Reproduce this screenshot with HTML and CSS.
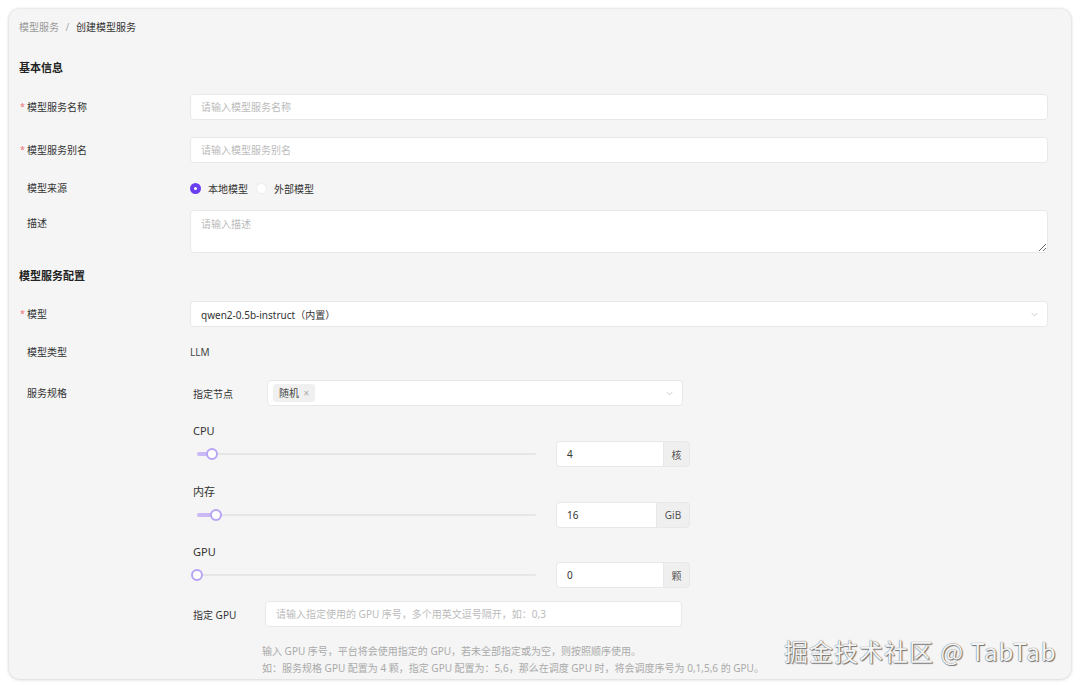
FILE: index.html
```html
<!DOCTYPE html>
<html lang="zh-CN">
<head>
    <meta charset="UTF-8">
    <title>创建模型服务</title>
    <link rel="stylesheet" href="styles.css">
</head>
<body>
    <div class="card">
        <div class="breadcrumb">
            <span class="crumb-link">模型服务</span>
            <span class="crumb-sep">/</span>
            <span class="crumb-current">创建模型服务</span>
        </div>

        <div class="section-title first">基本信息</div>

        <div class="form-item">
            <div class="label required">模型服务名称</div>
            <div class="control"><input class="input" placeholder="请输入模型服务名称"></div>
        </div>
        <div class="form-item alias-item">
            <div class="label required">模型服务别名</div>
            <div class="control"><input class="input" placeholder="请输入模型服务别名"></div>
        </div>
        <div class="form-item radio-item">
            <div class="label">模型来源</div>
            <div class="control radio-group">
                <span class="radio checked"></span><span class="radio-text">本地模型</span>
                <span class="radio"></span><span class="radio-text">外部模型</span>
            </div>
        </div>
        <div class="form-item desc-item">
            <div class="label">描述</div>
            <div class="control"><textarea class="textarea" placeholder="请输入描述"></textarea></div>
        </div>

        <div class="section-title">模型服务配置</div>

        <div class="form-item">
            <div class="label required">模型</div>
            <div class="control">
                <div class="select">
                    <span>qwen2-0.5b-instruct（内置）</span>
                    <svg class="arrow" width="9" height="9" viewBox="0 0 10 10"><path d="M2 3.5 L5 6.5 L8 3.5" fill="none" stroke="#c4c4c4" stroke-width="1"/></svg>
                </div>
            </div>
        </div>
        <div class="form-item text-item">
            <div class="label">模型类型</div>
            <div class="control plain">LLM</div>
        </div>
        <div class="form-item">
            <div class="label">服务规格</div>
            <div class="control spec">
                <div class="sub-item">
                    <div class="sub-label">指定节点</div>
                    <div class="select node-select">
                        <span class="tag">随机 <span class="tag-close">×</span></span>
                        <svg class="arrow" width="9" height="9" viewBox="0 0 10 10"><path d="M2 3.5 L5 6.5 L8 3.5" fill="none" stroke="#c4c4c4" stroke-width="1"/></svg>
                    </div>
                </div>

                <div class="res-title">CPU</div>
                <div class="res-row">
                    <div class="slider">
                        <div class="track"></div>
                        <div class="fill" style="width: 15px"></div>
                        <div class="handle" style="left: 15px"></div>
                    </div>
                    <div class="input-group">
                        <input class="input" value="4">
                        <span class="addon">核</span>
                    </div>
                </div>

                <div class="res-title">内存</div>
                <div class="res-row">
                    <div class="slider">
                        <div class="track"></div>
                        <div class="fill" style="width: 19px"></div>
                        <div class="handle" style="left: 19px"></div>
                    </div>
                    <div class="input-group">
                        <input class="input" value="16">
                        <span class="addon wide">GiB</span>
                    </div>
                </div>

                <div class="res-title gpu-title">GPU</div>
                <div class="res-row">
                    <div class="slider">
                        <div class="track"></div>
                        <div class="handle" style="left: 0px"></div>
                    </div>
                    <div class="input-group">
                        <input class="input" value="0">
                        <span class="addon">颗</span>
                    </div>
                </div>

                <div class="sub-item gpu-item">
                    <div class="sub-label">指定 GPU</div>
                    <input class="input gpu-input" placeholder="请输入指定使用的 GPU 序号，多个用英文逗号隔开，如：0,3">
                </div>
                <div class="help">
                    输入 GPU 序号，平台将会使用指定的 GPU，若未全部指定或为空，则按照顺序使用。<br>
                    如：服务规格 GPU 配置为 4 颗，指定 GPU 配置为：5,6，那么在调度 GPU 时，将会调度序号为 0,1,5,6 的 GPU。
                </div>
            </div>
        </div>
    </div>

    <div class="watermark">掘金技术社区 @ TabTab</div>
</body>
</html>
```

FILE: styles.css
```css
body {
    margin: 0;
    padding: 9px;
    background-color: #ffffff;
    font-family: "Noto Sans", "Noto Sans CJK SC", sans-serif;
    color: #333;
    font-size: 10px;
    height: 687px;
    box-sizing: border-box;
    overflow: hidden;
}

.card {
    background-color: #f5f5f5;
    border-radius: 10px;
    box-shadow: 0 0 3px rgba(0, 0, 0, 0.18), 0 1px 4px rgba(0, 0, 0, 0.08);
    height: 670px;
    width: 1062px;
    box-sizing: border-box;
    padding: 11px 23px 0 10px;
    overflow: hidden;
}

.breadcrumb {
    line-height: 14px;
    font-size: 10px;
}

.crumb-link {
    color: #999;
}

.crumb-sep {
    color: #aaa;
    margin: 0 4px;
}

.crumb-current {
    color: #333;
}

.section-title {
    font-size: 11px;
    font-weight: bold;
    line-height: 14px;
    color: #222;
    margin: 0 0 18px;
}

.section-title.first {
    margin-top: 27px;
    margin-bottom: 19px;
}

.form-item {
    display: flex;
    align-items: flex-start;
    margin-bottom: 17px;
}

.alias-item,
.desc-item {
    margin-bottom: 16px;
}

.label {
    width: 171px;
    flex-shrink: 0;
    line-height: 26px;
    padding-left: 8px;
    box-sizing: border-box;
    color: #333;
    position: relative;
}

.label.required::before {
    content: "*";
    color: #ee6e73;
    font-size: 9px;
    position: absolute;
    left: 1px;
    top: 0;
}

.control {
    flex: 1;
}

.input {
    width: 100%;
    height: 26px;
    box-sizing: border-box;
    border: 1px solid #e8e8e8;
    border-radius: 4px;
    background: #fff;
    padding: 0 10px;
    font-family: inherit;
    font-size: 10px;
    color: #333;
    outline: none;
}

.input::placeholder,
.textarea::placeholder {
    color: #bbb;
}

.textarea {
    width: 100%;
    height: 43px;
    box-sizing: border-box;
    border: 1px solid #e8e8e8;
    border-radius: 4px;
    background: #fff;
    padding: 5px 10px;
    font-family: inherit;
    font-size: 10px;
    resize: vertical;
    display: block;
    outline: none;
}

.radio-item {
    margin-bottom: 13px;
}

.radio-item .label {
    line-height: 18px;
}

.radio-group {
    display: flex;
    align-items: center;
    height: 18px;
}

.radio {
    width: 11px;
    height: 11px;
    border-radius: 50%;
    background: #fff;
    border: 1px solid #eee;
    box-sizing: border-box;
    margin-right: 7px;
}

.radio.checked {
    border: 3px solid #6b3ff0;
    background: #6b3ff0;
    position: relative;
}

.radio.checked::after {
    content: "";
    position: absolute;
    left: 1px;
    top: 1px;
    width: 3px;
    height: 3px;
    background: #fff;
    border-radius: 50%;
}

.radio-text {
    margin-right: 8px;
    color: #333;
}

.select {
    height: 26px;
    box-sizing: border-box;
    border: 1px solid #e8e8e8;
    border-radius: 4px;
    background: #fff;
    display: flex;
    align-items: center;
    justify-content: space-between;
    padding: 0 8px 0 10px;
    color: #333;
}

.text-item {
    margin-bottom: 20px;
}

.text-item .label,
.plain {
    line-height: 16px;
}

.plain {
    color: #444;
}

.spec {
    padding-left: 3px;
}

.sub-item {
    display: flex;
    align-items: center;
}

.sub-label {
    width: 74px;
    flex-shrink: 0;
    color: #333;
}

.node-select {
    width: 416px;
    padding-left: 5px;
}

.tag {
    background: #f0f0f0;
    border-radius: 3px;
    padding: 2px 6px;
    line-height: 14px;
    color: #444;
}

.tag-close {
    color: #aaa;
    margin-left: 2px;
}

.res-title {
    font-size: 11px;
    line-height: 15px;
    margin-top: 17px;
    color: #333;
}

.res-title.gpu-title {
    margin-top: 16px;
}

.res-row {
    display: flex;
    align-items: center;
    margin-top: 3px;
}

.slider {
    position: relative;
    width: 339px;
    height: 26px;
    margin-left: 4px;
    margin-right: 20px;
}

.track {
    position: absolute;
    left: 0;
    right: 0;
    top: 12px;
    height: 2px;
    background: #e6e6e6;
    border-radius: 2px;
}

.fill {
    position: absolute;
    left: 0;
    top: 11px;
    height: 4px;
    background: #c9b9f5;
    border-radius: 2px;
}

.handle {
    position: absolute;
    top: 7px;
    width: 12px;
    height: 12px;
    margin-left: -6px;
    box-sizing: border-box;
    border: 2px solid #b8a4f4;
    background: #fff;
    border-radius: 50%;
}

.input-group {
    display: flex;
    width: 134px;
    height: 26px;
}

.input-group .input {
    flex: 1;
    border-radius: 4px 0 0 4px;
    border-right: none;
}

.addon {
    width: 27px;
    flex-shrink: 0;
    box-sizing: border-box;
    background: #efefef;
    border: 1px solid #e8e8e8;
    border-radius: 0 4px 4px 0;
    display: flex;
    align-items: center;
    justify-content: center;
    color: #555;
}

.addon.wide {
    width: 34px;
}

.gpu-item {
    margin-top: 13px;
}

.gpu-item .sub-label {
    width: 72px;
}

.gpu-input {
    width: 417px;
}

.help {
    margin-top: 16px;
    margin-left: 69px;
    font-size: 10px;
    line-height: 17px;
    color: #aaa;
}

.watermark {
    position: absolute;
    left: 784px;
    top: 633px;
    font-size: 24px;
    font-family: "Noto Sans CJK SC", sans-serif;
    color: #f4f4f4;
    text-shadow: 0 0 1px #444, 1px 1px 1px #777;
    letter-spacing: 1px;
}
```
